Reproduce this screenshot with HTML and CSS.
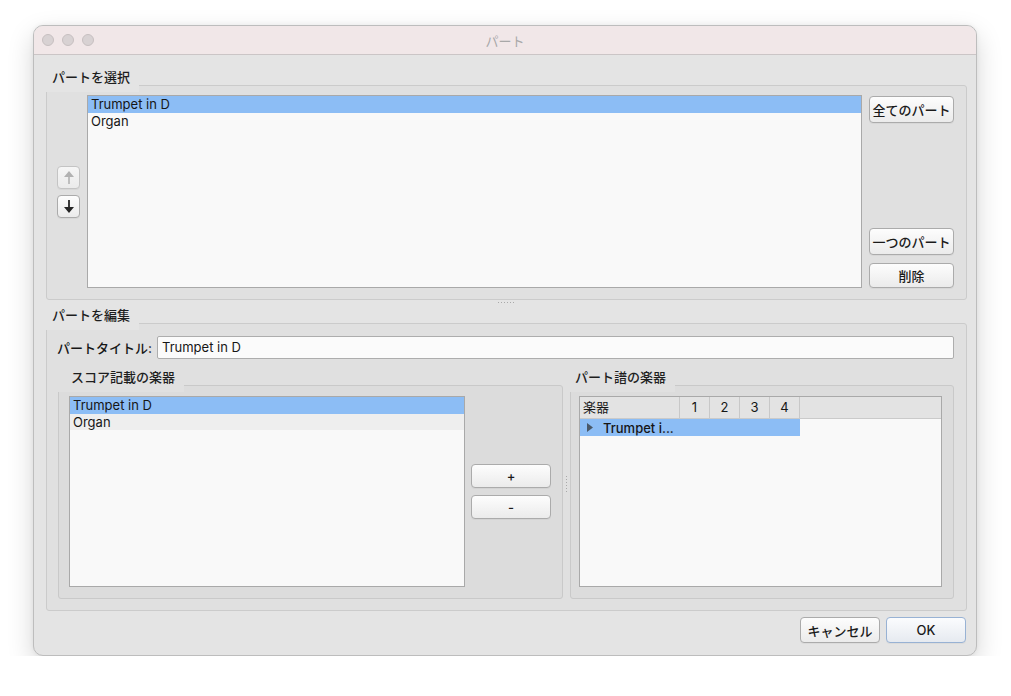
FILE: index.html
```html
<!DOCTYPE html>
<html lang="ja">
<head>
  <meta charset="UTF-8">
  <meta name="viewport" content="width=device-width, initial-scale=1.0">
  <title>パート</title>
  <link rel="stylesheet" href="styles.css">
</head>
<body>
  <div class="window">
    <div class="titlebar">
      <div class="lights"><span></span><span></span><span></span></div>
      <div class="title">パート</div>
      <div></div>
    </div>

    <div class="content">
      <!-- Part selection -->
      <div class="group select-group">
        <div class="group-title">パートを選択</div>
        <div class="move-buttons">
          <button class="button arrow-button" disabled>
            <svg width="12" height="15" viewBox="0 0 12 15"><path d="M6 1 L11 7 L6.8 7 L6.8 14 L5.2 14 L5.2 7 L1 7 Z" fill="#b2b2b2"/></svg>
          </button>
          <button class="button arrow-button">
            <svg width="12" height="15" viewBox="0 0 12 15"><path d="M6 14 L11 8 L6.9 8 L6.9 1 L5.1 1 L5.1 8 L1 8 Z" fill="#262626"/></svg>
          </button>
        </div>
        <div class="list part-list">
          <div class="row selected">Trumpet in D</div>
          <div class="row">Organ</div>
        </div>
        <div class="side-buttons">
          <button class="button side-button">全てのパート</button>
          <div class="spacer"></div>
          <button class="button side-button">一つのパート</button>
          <button class="button side-button small">削除</button>
        </div>
      </div>

      <div class="splitter-h"><span class="dots-h"></span></div>

      <!-- Part editing -->
      <div class="group edit-group">
        <div class="group-title">パートを編集</div>
        <div class="title-row">
          <label class="field-label">パートタイトル:</label>
          <div class="text-input">Trumpet in D</div>
        </div>
        <div class="sub-row">
          <div class="subgroup score-group">
            <div class="group-title sub-title">スコア記載の楽器</div>
            <div class="list inst-list">
              <div class="row selected">Trumpet in D</div>
              <div class="row alt">Organ</div>
            </div>
            <div class="pm-buttons">
              <button class="button pm-button">+</button>
              <button class="button pm-button">-</button>
            </div>
          </div>
          <div class="splitter-v"><span class="dots-v"></span></div>
          <div class="subgroup part-group">
            <div class="group-title sub-title tight">パート譜の楽器</div>
            <div class="tree">
              <div class="tree-header">
                <div class="cell name-cell">楽器</div>
                <div class="cell num-cell">1</div>
                <div class="cell num-cell">2</div>
                <div class="cell num-cell">3</div>
                <div class="cell num-cell">4</div>
                <div class="cell rest-cell"></div>
              </div>
              <div class="tree-row selected">
                <svg class="expander" width="6" height="9" viewBox="0 0 6 9"><path d="M0 0 L6 4.5 L0 9 Z" fill="#4a5868"/></svg>
                <span>Trumpet i...</span>
              </div>
            </div>
          </div>
        </div>
      </div>

      <div class="footer">
        <button class="button footer-button">キャンセル</button>
        <button class="button footer-button default">OK</button>
      </div>
    </div>
  </div>
</body>
</html>
```

FILE: styles.css
```css
/* General reset */
* {
  margin: 0;
  padding: 0;
  box-sizing: border-box;
}

body {
  background-color: #ffffff;
  font-family: "Inter", "Noto Sans CJK JP", sans-serif;
  font-size: 13px;
  color: #161616;
}

/* Window frame */
.window {
  width: 944px;
  margin: 25px 0 0 33px;
  background-color: #e4e4e4;
  border: 1px solid #bdbdbd;
  border-radius: 10px;
  box-shadow: 0 10px 26px rgba(0, 0, 0, 0.17), 0 0 5px rgba(0, 0, 0, 0.06);
}

.titlebar {
  display: grid;
  grid-template-columns: 1fr auto 1fr;
  align-items: center;
  height: 29px;
  background-color: #f1e7e8;
  border-bottom: 1px solid #cbc5c6;
  border-radius: 9px 9px 0 0;
}

.lights {
  display: flex;
  gap: 8px;
  padding-left: 8px;
}

.lights span {
  width: 12px;
  height: 12px;
  border-radius: 50%;
  background-color: #d8d2d3;
  border: 1px solid #c7c0c1;
}

.title {
  color: #a8a8a8;
  font-size: 13px;
}

.content {
  padding: 30px 9px 12px 12px;
}

/* Group boxes */
.group {
  position: relative;
  background-color: #e0e0e0;
  border: 1px solid #cbcbcb;
  border-radius: 3px;
}

.group-title {
  position: absolute;
  top: -20px;
  left: -2px;
  padding: 2px 9px 6px 7px;
  line-height: 18px;
  background-color: #e4e4e4;
  color: #1e1e1e;
  font-weight: 500;
}

.sub-title {
  background-color: #e0e0e0;
  padding-left: 14px;
}

.sub-title.tight {
  padding-left: 6px;
}

.select-group {
  display: flex;
  align-items: stretch;
  height: 215px;
  padding: 9px 12px 11px 10px;
  gap: 7px;
}

.move-buttons {
  display: flex;
  flex-direction: column;
  justify-content: center;
  gap: 6px;
  width: 23px;
}

.side-buttons {
  display: flex;
  flex-direction: column;
  width: 85px;
  padding-top: 1px;
}

.spacer {
  flex: 1;
}

/* Buttons */
.button {
  display: flex;
  align-items: center;
  justify-content: center;
  font-family: inherit;
  font-size: 13px;
  font-weight: 500;
  color: #1a1a1a;
  background: linear-gradient(#fdfdfd, #ebebeb);
  border: 1px solid #ababab;
  border-radius: 4px;
  box-shadow: 0 1px 0 rgba(0, 0, 0, 0.04);
  cursor: pointer;
}

.arrow-button {
  width: 23px;
  height: 23px;
}

.arrow-button:disabled {
  border-color: #c4c4c4;
  background: linear-gradient(#f6f6f6, #ebebeb);
}

.side-button {
  height: 27px;
}

.side-button + .side-button {
  margin-top: 8px;
}

.side-button.small {
  height: 25px;
}

/* Lists */
.list {
  flex: 1;
  background-color: #f9f9f9;
  border: 1px solid #a9a9a9;
}

.row {
  height: 17px;
  line-height: 17px;
  padding-left: 3px;
}

.row.selected {
  background-color: #8cbdf5;
}

.row.alt {
  background-color: #eeeeee;
  height: 16px;
  line-height: 16px;
}

.splitter-h {
  display: flex;
  justify-content: center;
  align-items: center;
  height: 5px;
  margin-bottom: 18px;
}

.dots-h {
  width: 17px;
  height: 1px;
  background-image: linear-gradient(to right, #a9a9a9 1px, transparent 1px);
  background-size: 3px 1px;
}

/* Edit group */
.edit-group {
  height: 288px;
  padding: 12px 12px 11px 10px;
}

.title-row {
  display: flex;
  align-items: center;
  height: 23px;
}

.field-label {
  width: 100px;
  font-weight: 500;
}

.text-input {
  flex: 1;
  height: 23px;
  line-height: 21px;
  padding-left: 4px;
  background-color: #fbfbfb;
  border: 1px solid #adadad;
  border-radius: 2px;
}

.sub-row {
  display: flex;
  margin: 26px 0 0 1px;
}

.subgroup {
  position: relative;
  display: flex;
  height: 214px;
  background-color: #dcdcdc;
  border: 1px solid #c9c9c9;
  border-radius: 3px;
}

.score-group {
  width: 505px;
  padding: 10px 11px 11px 10px;
  gap: 6px;
}

.inst-list {
  flex: none;
  width: 396px;
}

.pm-buttons {
  display: flex;
  flex-direction: column;
  justify-content: center;
  gap: 7px;
  width: 80px;
}

.pm-button {
  height: 24px;
}

.splitter-v {
  display: flex;
  justify-content: center;
  align-items: center;
  width: 7px;
  padding-bottom: 16px;
}

.dots-v {
  width: 1px;
  height: 17px;
  background-image: linear-gradient(#a9a9a9 1px, transparent 1px);
  background-size: 1px 3px;
}

.part-group {
  flex: 1;
  padding: 10px 11px 11px 8px;
}

/* Tree */
.tree {
  flex: 1;
  background-color: #f9f9f9;
  border: 1px solid #a9a9a9;
}

.tree-header {
  display: flex;
  height: 22px;
  background-color: #e3e3e3;
  border-bottom: 1px solid #cacaca;
}

.cell {
  line-height: 21px;
  border-right: 1px solid #c8c8c8;
}

.name-cell {
  width: 100px;
  padding-left: 3px;
}

.num-cell {
  width: 30px;
  text-align: center;
}

.rest-cell {
  flex: 1;
  border-right: none;
}

.tree-row {
  display: flex;
  align-items: center;
  width: 220px;
  height: 17px;
  gap: 10px;
  padding-left: 7px;
}

.tree-row.selected {
  background-color: #8cbdf5;
  font-weight: 500;
}

/* Footer */
.footer {
  display: flex;
  justify-content: flex-end;
  gap: 6px;
  margin: 6px 1px 0 0;
}

.footer-button {
  width: 80px;
  height: 26px;
}

.footer-button.default {
  border-color: #98b2d4;
  background: linear-gradient(#fbfcfe, #e6eaf0);
}
```
